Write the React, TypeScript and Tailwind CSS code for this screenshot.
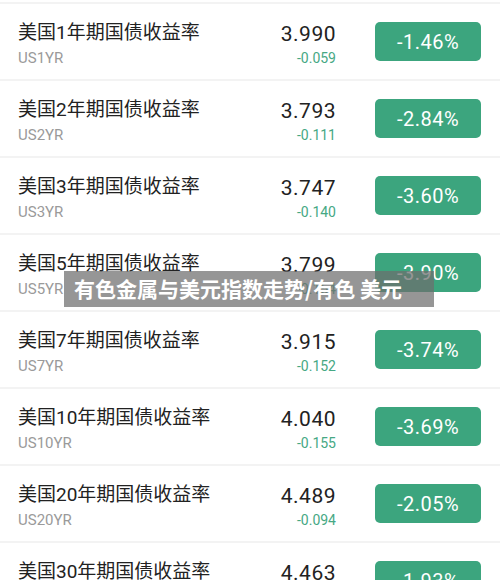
import React from 'react';

const rows = [
  { name: '美国1年期国债收益率', code: 'US1YR', price: '3.990', change: '-0.059', pct: '-1.46%' },
  { name: '美国2年期国债收益率', code: 'US2YR', price: '3.793', change: '-0.111', pct: '-2.84%' },
  { name: '美国3年期国债收益率', code: 'US3YR', price: '3.747', change: '-0.140', pct: '-3.60%' },
  { name: '美国5年期国债收益率', code: 'US5YR', price: '3.799', change: '-0.154', pct: '-3.90%' },
  { name: '美国7年期国债收益率', code: 'US7YR', price: '3.915', change: '-0.152', pct: '-3.74%' },
  { name: '美国10年期国债收益率', code: 'US10YR', price: '4.040', change: '-0.155', pct: '-3.69%' },
  { name: '美国20年期国债收益率', code: 'US20YR', price: '4.489', change: '-0.094', pct: '-2.05%' },
  { name: '美国30年期国债收益率', code: 'US30YR', price: '4.463', change: '-0.090', pct: '-1.93%' },
];

const font = { fontFamily: 'Roboto, "Noto Sans CJK SC", sans-serif' };

export default function App() {
  return (
    <div className="relative w-[500px] h-[580px] overflow-hidden bg-white" style={font}>
      <div className="pt-[2px]">
        {rows.map((r) => (
          <div
            key={r.code}
            className="flex items-center h-[77px] border-t-2 border-[#f3f3f3] pl-[18px] pr-[19px]"
          >
            {/* Name + ticker */}
            <div className="flex flex-col flex-1 pt-[4px]">
              <span className="text-[19px] leading-[26px] text-[#222]">{r.name}</span>
              <span className="text-[15px] leading-[20px] text-[#9a9a9a] mt-[2px]">{r.code}</span>
            </div>

            {/* Price + change */}
            <div className="flex flex-col items-end w-[120px] pt-[4px]">
              <span className="text-[21px] leading-[27px] text-[#222] tracking-[0.5px]">{r.price}</span>
              <span className="text-[14px] leading-[18px] text-[#46a884] mt-[1px]">{r.change}</span>
            </div>

            {/* Percent badge */}
            <div className="ml-[39px] w-[106px] h-[39px] rounded-[5px] bg-[#3ca57e] flex items-center justify-center">
              <span className="text-[20px] text-white tracking-[0.5px]">{r.pct}</span>
            </div>
          </div>
        ))}
      </div>

      {/* Caption overlay */}
      <div className="absolute left-[64px] top-[271px] w-[370px] h-[36px] bg-[rgba(110,110,110,0.72)] flex items-center pl-[10px]">
        <span className="text-[21px] font-bold text-white" style={{ fontFamily: '"Noto Sans CJK SC", sans-serif' }}>
          有色金属与美元指数走势/有色 美元
        </span>
      </div>
    </div>
  );
}
